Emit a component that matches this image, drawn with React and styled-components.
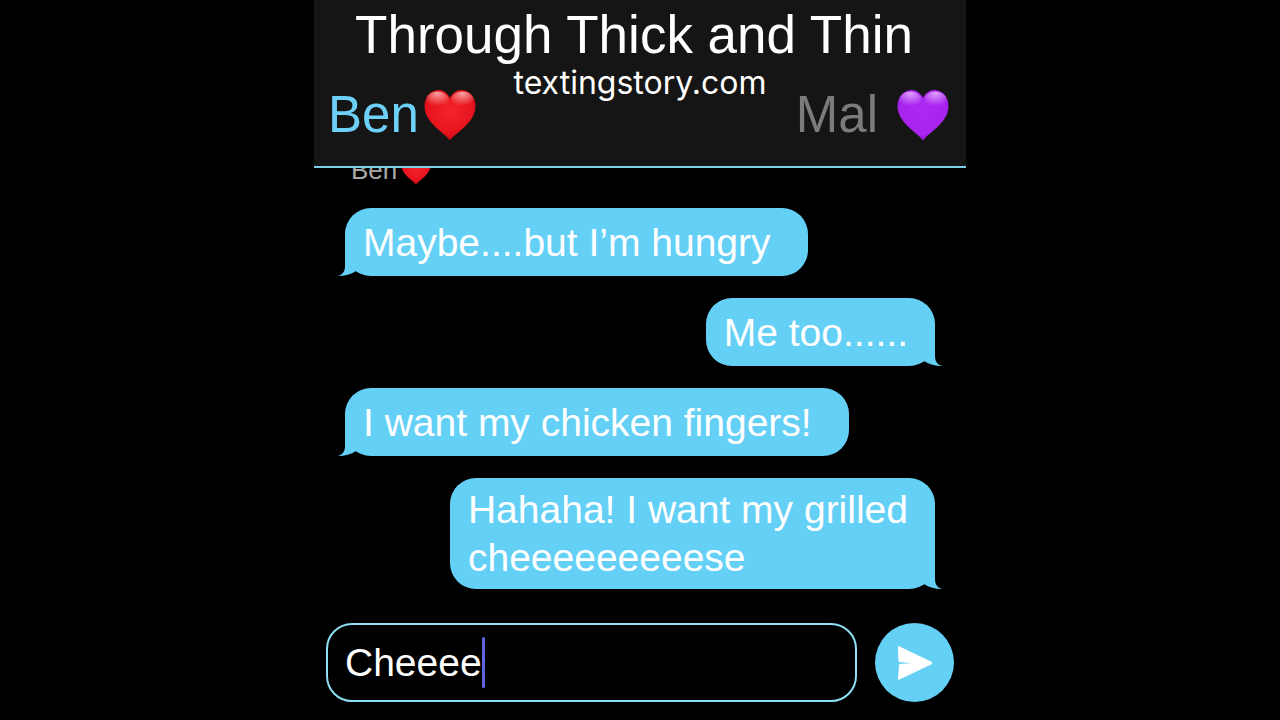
import React, { useState } from 'react'
import styled, { createGlobalStyle } from 'styled-components'

const GlobalStyle = createGlobalStyle`
  * {
    box-sizing: border-box;
  }
  body {
    margin: 0;
    background: #000;
    font-family: "Liberation Sans", Arial, sans-serif;
  }
`
const Page = styled.main`
  display: flex;
  flex-direction: column;
  width: 100%;
  max-width: 652px;
  height: 100vh;
  margin: 0 auto;
`
const Header = styled.header`
  flex-shrink: 0;
  padding: 3px 14px 19px;
  color: #fff;
  background: #151515;
  border-bottom: 2px solid #7fcfe6;
`
const Title = styled.h1`
  margin: 0;
  padding-right: 12px;
  font-size: 53px;
  font-weight: 400;
  line-height: 64px;
  text-align: center;
  white-space: nowrap;
`
const People = styled.div`
  display: grid;
  grid-template-columns: 1fr auto 1fr;
  align-items: start;
`
const Person = styled.button`
  display: flex;
  align-items: center;
  justify-self: ${(props) => (props.$active ? 'start' : 'end')};
  gap: ${(props) => props.$gap};
  margin: 0;
  padding: 16px ${(props) => (props.$active ? '0' : '3px')} 0 0;
  border: 0;
  background: none;
  color: ${(props) => (props.$active ? '#6dd0f7' : '#7b7b7b')};
  font-family: inherit;
  font-size: 51px;
  line-height: 64px;
  cursor: pointer;
`
const Site = styled.a`
  color: #fff;
  font-family: Inter, "Liberation Sans", sans-serif;
  font-size: 32px;
  line-height: 32px;
  text-decoration: none;
`
const HeartIcon = styled.svg`
  display: block;
  flex-shrink: 0;
  width: ${(props) => props.$size};
  height: ${(props) => props.$size};
`
const Chat = styled.section`
  display: flex;
  flex: 1;
  flex-direction: column;
  justify-content: flex-end;
  gap: 22px;
  min-height: 0;
  padding: 0 31px 34px;
  overflow: hidden;
`
const Sender = styled.div`
  display: flex;
  flex-shrink: 0;
  align-items: center;
  gap: 4px;
  padding-left: 6px;
  color: #a9a9a9;
  font-size: 26px;
  line-height: 32px;
`
const Bubble = styled.div`
  position: relative;
  display: flex;
  flex-shrink: 0;
  align-items: center;
  align-self: ${(props) => (props.$mine ? 'flex-end' : 'flex-start')};
  max-width: 88%;
  min-height: 68px;
  padding: 8px ${(props) => (props.$mine ? '27px' : '37px')} 7px 18px;
  border-radius: 26px;
  background: #64d0f6;
  color: #fff;
  font-size: 39px;
  line-height: 48px;
`
const Text = styled.p`
  margin: 0;
  white-space: pre-line;
`
const Tail = styled.svg`
  position: absolute;
  bottom: 0;
  ${(props) => (props.$mine ? 'right: -7px; transform: scaleX(-1);' : 'left: -7px;')}
  width: 24px;
  height: 26px;
`
const Composer = styled.form`
  display: flex;
  flex-shrink: 0;
  align-items: center;
  gap: 18px;
  padding: 0 12px 18px;
`
const Field = styled.label`
  display: flex;
  flex: 1;
  align-items: center;
  min-width: 0;
  height: 79px;
  padding: 0 17px;
  border: 2px solid #8edff5;
  border-radius: 26px;
  cursor: text;
`
const Input = styled.input`
  field-sizing: content;
  max-width: 100%;
  padding: 0;
  border: 0;
  outline: none;
  background: none;
  color: #fff;
  caret-color: transparent;
  font-family: inherit;
  font-size: 39px;
  line-height: 48px;
`
const Caret = styled.span`
  flex-shrink: 0;
  width: 3px;
  height: 51px;
  border-radius: 2px;
  background: #6065dc;
`
const Send = styled.button`
  display: flex;
  flex-shrink: 0;
  align-items: center;
  justify-content: center;
  width: 79px;
  height: 79px;
  padding: 0;
  border: 0;
  border-radius: 50%;
  background: #64d0f6;
  cursor: pointer;
`

const hearts = {
  red: { edge: '#b8040e', base: '#e6131c', glow: '#f5242b', shine: '#ffb8b8' },
  purple: { edge: '#8f1ad4', base: '#a823ee', glow: '#ad2af2', shine: '#e9b4ff' },
}

const heartPath =
  'M26 51.500C20 43 0.500 34 0.500 17C0.500 7.500 7 1 14.500 1C19.500 1 23.500 4 26 9C28.500 4 32.500 1 37.500 1C45 1 51.500 7.500 51.500 17C51.500 34 32 43 26 51.500Z'

const Heart = ({ color, size, id }) => {
  const tone = hearts[color]
  return (
    <HeartIcon $size={size} viewBox="0 0 52 52" aria-hidden="true">
      <defs>
        <radialGradient id={`${id}-body`} cx="0.5" cy="0.42" r="0.6">
          <stop offset="0" stopColor={tone.glow} />
          <stop offset="0.75" stopColor={tone.base} />
          <stop offset="1" stopColor={tone.edge} />
        </radialGradient>
        <radialGradient id={`${id}-shine`} cx="0.5" cy="0.1" r="0.75">
          <stop offset="0" stopColor={tone.shine} stopOpacity="0.85" />
          <stop offset="1" stopColor={tone.shine} stopOpacity="0" />
        </radialGradient>
      </defs>
      <path d={heartPath} fill={`url(#${id}-body)`} />
      <ellipse cx="13.500" cy="11" rx="11" ry="8.500" fill={`url(#${id}-shine)`} />
      <ellipse cx="38.500" cy="11" rx="11" ry="8.500" fill={`url(#${id}-shine)`} />
    </HeartIcon>
  )
}

const messages = [
  { mine: false, text: 'Maybe....but I’m hungry' },
  { mine: true, text: 'Me too......' },
  { mine: false, text: 'I want my chicken fingers!' },
  { mine: true, text: 'Hahaha! I want my grilled\ncheeeeeeeeese' },
]

const App = () => {
  const [draft, setDraft] = useState('Cheeee')

  return (
    <Page>
      <GlobalStyle />
      <Header>
        <Title>Through Thick and Thin</Title>
        <People>
          <Person type="button" $active $gap="5px">
            Ben
            <Heart color="red" size="52px" id="ben" />
          </Person>
          <Site href="#">textingstory.com</Site>
          <Person type="button" $gap="19px">
            Mal
            <Heart color="purple" size="52px" id="mal" />
          </Person>
        </People>
      </Header>
      <Chat>
        <Sender>
          Ben
          <Heart color="red" size="30px" id="sender" />
        </Sender>
        {messages.map((message) => (
          <Bubble key={message.text} $mine={message.mine}>
            <Text>{message.text}</Text>
            <Tail $mine={message.mine} viewBox="0 0 24 26" aria-hidden="true">
              <path d="M7 0V16C7 21 5 24.500 0 26C7 26 13 24.500 18 21L24 0Z" fill="#64d0f6" />
            </Tail>
          </Bubble>
        ))}
      </Chat>
      <Composer onSubmit={(e) => e.preventDefault()}>
        <Field>
          <Input aria-label="Message" value={draft} onChange={(e) => setDraft(e.target.value)} />
          <Caret />
        </Field>
        <Send type="submit" aria-label="Send">
          <svg width="36" height="36" viewBox="0 0 36 36" aria-hidden="true">
            <path
              d="M1.500 1.500L34.500 17.200Q35.500 18 34.500 18.800L1.500 34.500L2.500 19.500L20 18.300L2 16.500Z"
              fill="#fff"
              stroke="#fff"
              strokeWidth="1"
              strokeLinejoin="round"
            />
          </svg>
        </Send>
      </Composer>
    </Page>
  )
}

export default App
